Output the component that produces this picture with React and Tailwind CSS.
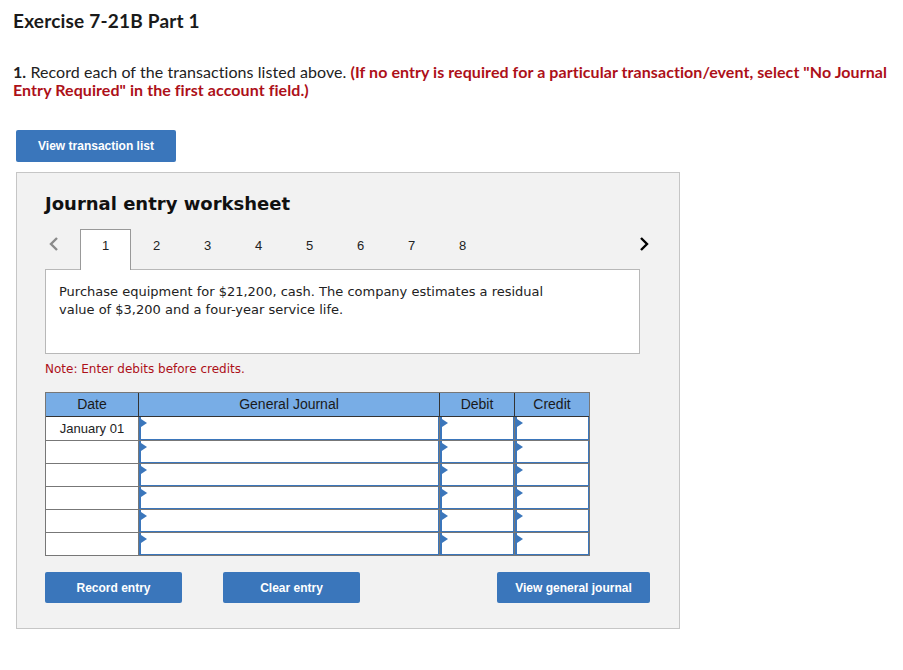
import React from 'react'

const tabs = [1, 2, 3, 4, 5, 6, 7, 8]
const rows = ['January 01', '', '', '', '', '']

const Chevron = ({ dir, className }) => (
  <svg width="12" height="16" viewBox="0 0 12 16" className={className}>
    {dir === 'left' ? (
      <polyline points="9,2 3,8 9,14" fill="none" stroke="currentColor" strokeWidth="2.4" />
    ) : (
      <polyline points="3,2 9,8 3,14" fill="none" stroke="currentColor" strokeWidth="2.4" />
    )}
  </svg>
)

const EntryCell = ({ last }) => (
  <div className={`h-full bg-white ${last ? '' : 'border-r border-[#777]'}`}>
    <div className="relative h-full border-l-2 border-r border-b border-[#3b76bb]">
      <span className="absolute left-0 top-[2px] h-0 w-0 border-y-[4px] border-l-[6px] border-y-transparent border-l-[#3b76bb]" />
    </div>
  </div>
)

const BlueButton = ({ children, className = '' }) => (
  <button
    className={`h-[31px] rounded-[2px] bg-[#3a76bb] text-[12px] font-bold text-white ${className}`}
    style={{ fontFamily: '"Liberation Sans", Arial, sans-serif' }}
  >
    {children}
  </button>
)

export default function App() {
  return (
    <div className="min-h-[670px] w-[903px] bg-white pt-[10px] text-[#1a1a1a]">
      {/* Heading + instructions */}
      <h1
        className="px-[13px] text-[19px] font-bold leading-[22px] tracking-[0.2px] text-[#1a1a1a]"
        style={{ fontFamily: 'Lato, "Open Sans", sans-serif' }}
      >
        Exercise 7-21B Part 1
      </h1>
      <p
        className="mt-[31px] px-[13px] text-[16px] leading-[18px] tracking-[0.07px] text-[#222]"
        style={{ fontFamily: 'Lato, "Open Sans", sans-serif' }}
      >
        <span className="font-bold">1.</span> Record each of the transactions listed above.{' '}
        <span className="font-bold text-[#ad1019]">
          (If no entry is required for a particular transaction/event, select "No Journal
          <br />
          Entry Required" in the first account field.)
        </span>
      </p>

      <div className="mt-[31px] px-[16px]">
        <BlueButton className="w-[160px] h-[32px]">View transaction list</BlueButton>
      </div>

      {/* Worksheet panel */}
      <div className="mx-[16px] mt-[10px] w-[664px] border border-[#c6c6c6] bg-[#f2f2f2] pb-[25px] pl-[28px] pt-[20px]">
        <h2
          className="text-[18px] font-bold leading-[22px] text-[#111]"
          style={{ fontFamily: '"DejaVu Sans", Verdana, sans-serif' }}
        >
          Journal entry worksheet
        </h2>

        {/* Tabs */}
        <div
          className="relative z-10 mt-[14px] -mb-px flex h-[41px] w-[605px] items-center"
          style={{ fontFamily: '"Liberation Sans", Arial, sans-serif' }}
        >
          <div className="flex h-full w-[35px] items-center pb-[12px] pl-[3px] text-[#8a8a8a]">
            <Chevron dir="left" />
          </div>
          {tabs.map((t) => (
            <div
              key={t}
              className={`flex h-full w-[51px] items-center justify-center pb-[8px] text-[13px] text-[#222] ${
                t === 1 ? 'border-x border-t border-[#999] bg-white' : ''
              }`}
            >
              {t}
            </div>
          ))}
          <div className="flex h-full flex-1 items-center justify-end pb-[12px] text-black">
            <Chevron dir="right" />
          </div>
        </div>

        <div
          className="h-[85px] w-[595px] border border-[#b8b8b8] bg-white pl-[13px] pt-[13px] text-[13px] leading-[18px] text-[#222]"
          style={{ fontFamily: '"DejaVu Sans", Verdana, sans-serif' }}
        >
          Purchase equipment for $21,200, cash. The company estimates a residual
          <br />
          value of $3,200 and a four-year service life.
        </div>

        <p
          className="mt-[7px] text-[12px] leading-[16px] text-[#ad1019]"
          style={{ fontFamily: '"DejaVu Sans", Verdana, sans-serif' }}
        >
          Note: Enter debits before credits.
        </p>

        {/* Journal table */}
        <div
          className="mt-[15px] w-[545px] border border-[#777]"
          style={{ fontFamily: '"Liberation Sans", Arial, sans-serif' }}
        >
          <div className="grid h-[24px] grid-cols-[93px_301px_75px_74px] border-b border-[#333] bg-[#78ade6] text-[14px] text-[#1a1a1a]">
            <div className="flex items-center justify-center border-r border-[#333]">Date</div>
            <div className="flex items-center justify-center border-r border-[#333]">General Journal</div>
            <div className="flex items-center justify-center border-r border-[#333]">Debit</div>
            <div className="flex items-center justify-center">Credit</div>
          </div>
          {rows.map((date, i) => (
            <div
              key={i}
              className={`grid h-[23px] grid-cols-[93px_301px_75px_74px] ${i > 0 ? 'border-t border-[#777]' : ''}`}
            >
              <div className="flex items-center justify-center border-r border-[#777] bg-white text-[13px] text-[#222]">
                {date}
              </div>
              <EntryCell />
              <EntryCell />
              <EntryCell last />
            </div>
          ))}
        </div>

        {/* Actions */}
        <div className="mt-[16px] flex w-[605px]">
          <BlueButton className="w-[137px]">Record entry</BlueButton>
          <BlueButton className="ml-[41px] w-[137px]">Clear entry</BlueButton>
          <BlueButton className="ml-auto w-[153px]">View general journal</BlueButton>
        </div>
      </div>
    </div>
  )
}
